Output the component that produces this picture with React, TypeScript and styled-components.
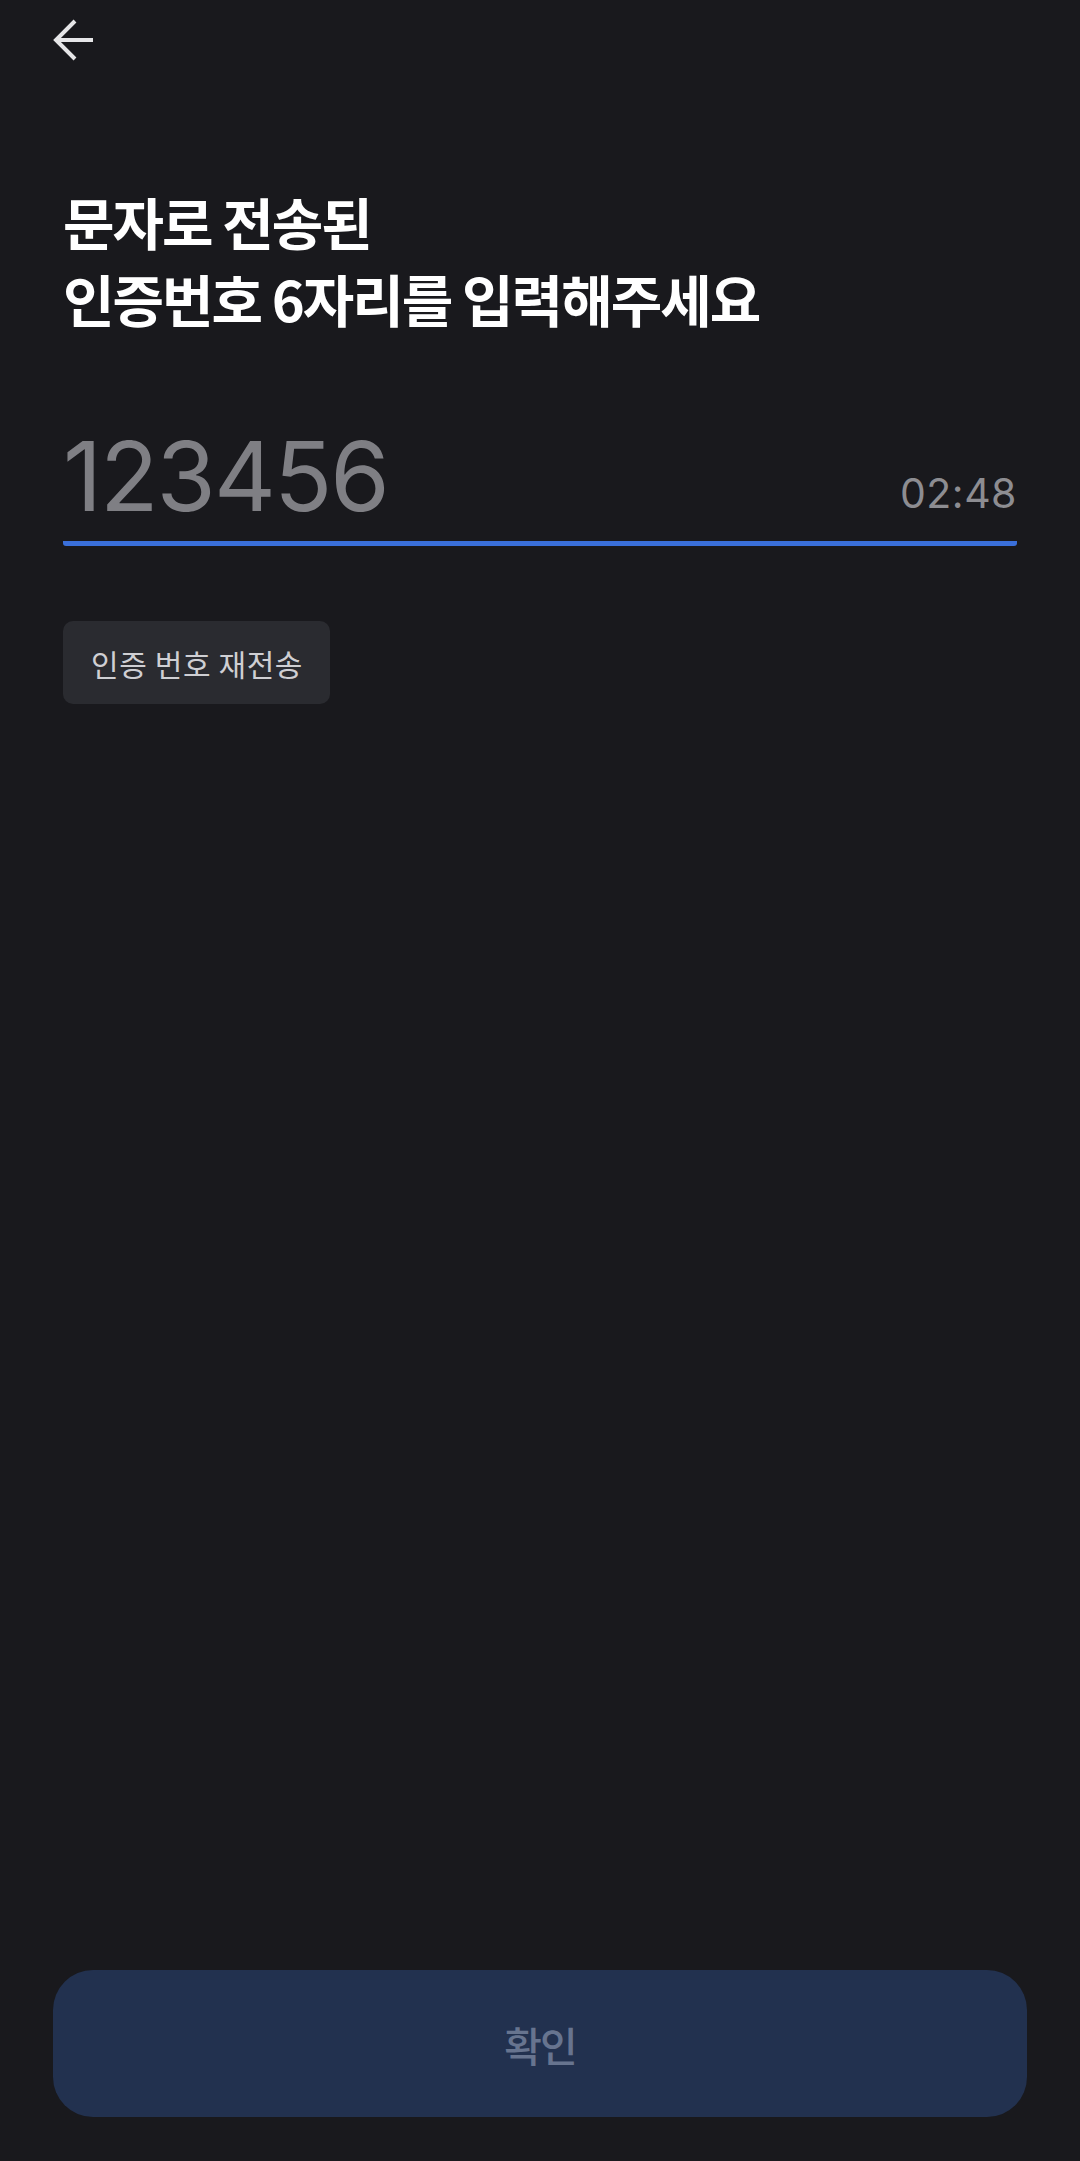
import styled, { createGlobalStyle } from 'styled-components';

const GlobalStyle = createGlobalStyle`
  html, body {
    margin: 0;
    padding: 0;
    background: #19191d;
  }
  body {
    font-family: "Noto Sans CJK KR", "Noto Sans", sans-serif;
  }
`;

const Screen = styled.div`
  display: flex;
  flex-direction: column;
  min-height: 2161px;
  background: #19191d;
  box-sizing: border-box;
`;

const Header = styled.div`
  height: 80px;
  display: flex;
  align-items: center;
  padding-left: 50px;
`;

const BackButton = styled.button`
  width: 48px;
  height: 48px;
  padding: 0;
  border: none;
  background: transparent;
  display: flex;
  align-items: center;
  justify-content: center;
`;

const Body = styled.div`
  display: flex;
  flex-direction: column;
  padding: 102px 63px 0;
  flex: 1;
`;

const Title = styled.h1`
  margin: 0;
  color: #ffffff;
  font-size: 56px;
  font-weight: 700;
  line-height: 77px;
  letter-spacing: -2px;
`;

const InputRow = styled.div`
  margin-top: 85px;
  display: flex;
  align-items: baseline;
  justify-content: space-between;
  padding-bottom: 10px;
  border-bottom: 5px solid #3a6fda;
  border-radius: 3px;
`;

const CodeInput = styled.input`
  flex: 1;
  min-width: 0;
  border: none;
  outline: none;
  background: transparent;
  padding: 0;
  font-family: Inter, "Liberation Sans", sans-serif;
  font-size: 96px;
  line-height: 110px;
  color: #ffffff;
  letter-spacing: -2px;
  &::placeholder {
    color: #7f7f84;
  }
`;

const Timer = styled.span`
  font-family: Inter, "Liberation Sans", sans-serif;
  font-size: 41px;
  line-height: 48px;
  color: #8d8d92;
  letter-spacing: 0.5px;
  transform: translateY(-3px);
`;

const ResendButton = styled.button`
  align-self: flex-start;
  margin-top: 75px;
  height: 83px;
  padding: 0 27px 0 28px;
  border: none;
  border-radius: 10px;
  background: #2a2b30;
  color: #cfcfd3;
  font-family: "Noto Sans CJK KR", sans-serif;
  font-size: 30px;
  letter-spacing: 0.6px;
`;

const Footer = styled.div`
  padding: 0 53px 44px;
`;

const ConfirmButton = styled.button`
  width: 100%;
  height: 147px;
  border: none;
  border-radius: 40px;
  background: #22314f;
  color: #67748f;
  font-family: "Noto Sans CJK KR", sans-serif;
  font-size: 41px;
  font-weight: 500;
  letter-spacing: -2px;
`;

const BackArrow = () => (
  <svg width="44" height="44" viewBox="0 0 44 44" fill="none">
    <path
      d="M41 22H4M23 3L4 22L23 41"
      stroke="#e6e6e8"
      strokeWidth="4"
      strokeLinecap="butt"
      strokeLinejoin="miter"
    />
  </svg>
);

const App = () => {
  return (
    <Screen>
      <GlobalStyle />
      <Header>
        <BackButton aria-label="뒤로가기">
          <BackArrow />
        </BackButton>
      </Header>
      <Body>
        <Title>
          문자로 전송된
          <br />
          인증번호 6자리를 입력해주세요
        </Title>
        <InputRow>
          <CodeInput placeholder="123456" inputMode="numeric" maxLength={6} />
          <Timer>02:48</Timer>
        </InputRow>
        <ResendButton>인증 번호 재전송</ResendButton>
      </Body>
      <Footer>
        <ConfirmButton>확인</ConfirmButton>
      </Footer>
    </Screen>
  );
};

export default App;
